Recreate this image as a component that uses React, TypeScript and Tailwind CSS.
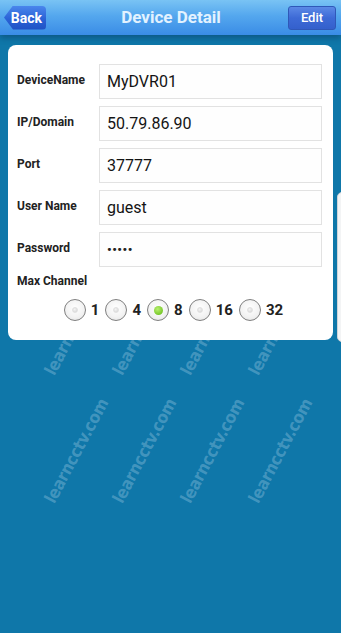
import React from "react";

const rows = [
  { label: "DeviceName", value: "MyDVR01" },
  { label: "IP/Domain", value: "50.79.86.90" },
  { label: "Port", value: "37777" },
  { label: "User Name", value: "guest" },
  { label: "Password", value: "•••••", pw: true },
];

const channels = ["1", "4", "8", "16", "32"];

function Radio({ checked }: { checked?: boolean }) {
  return (
    <div className="w-[22px] h-[22px] rounded-full border border-[#7f7f7f] bg-[radial-gradient(circle_at_50%_40%,#ffffff_0%,#f2f2f2_60%,#dcdcdc_100%)] flex items-center justify-center">
      {checked ? (
        <div className="w-[9px] h-[9px] rounded-full bg-[radial-gradient(circle_at_40%_35%,#b8f070_0%,#78c82a_70%,#5fa81c_100%)]" />
      ) : (
        <div className="w-[6px] h-[6px] rounded-full bg-[radial-gradient(circle_at_40%_35%,#f4f4f4_0%,#d2d2d2_100%)] border border-[#e0e0e0]" />
      )}
    </div>
  );
}

const wmRows = [378, 506];
const wmCols = [57, 125, 193, 261];

export default function App() {
  return (
    <div
      className="relative w-[341px] h-[633px] overflow-hidden bg-[#0f77a9]"
      style={{ fontFamily: "Roboto, 'Noto Sans', Arial, sans-serif" }}
    >
      {/* watermark layer (behind the content) */}
      <div className="absolute inset-0 pointer-events-none">
        {wmRows.map((yb) =>
          wmCols.map((x0) => (
            <span
              key={`${yb}-${x0}`}
              className="absolute whitespace-nowrap text-[17px] font-bold leading-[17px] text-[rgba(175,212,235,0.32)] origin-bottom-left"
              style={{
                left: x0,
                top: yb - 17,
                transform: "rotate(-62deg)",
                fontFamily: "'DejaVu Sans Condensed', 'Liberation Sans Narrow', sans-serif",
                fontStretch: "condensed",
                letterSpacing: "-0.3px",
              }}
            >
              learncctv.com
            </span>
          ))
        )}
      </div>

      {/* Header */}
      <div className="relative z-10 h-[35px] bg-[linear-gradient(to_bottom,#79c3f4_0%,#54a7ee_45%,#3a8ce6_100%)] shadow-[0_3px_6px_rgba(10,50,90,0.45)] flex items-center justify-between px-[4px]">
        <div className="relative h-[24px] flex items-center">
          <div className="h-[24px] w-[42px] bg-[linear-gradient(to_bottom,#4a86ec_0%,#2a62d6_55%,#1f52c4_100%)] [clip-path:polygon(9px_0,100%_0,100%_100%,9px_100%,0_50%)] rounded-r-[4px] flex items-center justify-end pr-[4px]">
            <span className="text-white text-[14px] font-bold leading-none">Back</span>
          </div>
        </div>
        <div className="absolute left-0 right-0 top-0 h-[35px] flex items-center justify-center pointer-events-none">
          <span className="text-[#e2f2ff] text-[17px] font-bold leading-none ml-[1px]">Device Detail</span>
        </div>
        <div className="h-[24px] w-[48px] mr-[1px] rounded-[3px] bg-[linear-gradient(to_bottom,#5b89e6_0%,#3d6ad6_50%,#3460cc_100%)] border border-[#2f58b8] flex items-center justify-center">
          <span className="text-white text-[13px] font-medium leading-none">Edit</span>
        </div>
      </div>

      {/* Card */}
      <div className="relative z-10 mt-[10px] mx-[8px] w-[325px] bg-white rounded-[8px] pt-[19px] pb-[19px] pl-[9px] pr-[11px]">
        <div className="flex flex-col gap-[7px]">
          {rows.map((r) => (
            <div key={r.label} className="flex items-center h-[35px]">
              <div className="w-[82px] text-[12px] font-bold text-[#222] leading-none -mt-[3px]">{r.label}</div>
              <div className="flex-1 h-[35px] border border-[#e2e2e2] bg-[#fefefe] flex items-center pl-[7px]">
                <span className={r.pw ? "text-[13px] text-[#222] font-bold tracking-[0.5px]" : "text-[16px] text-[#141414] leading-none"}>
                  {r.value}
                </span>
              </div>
            </div>
          ))}
        </div>
        <div className="mt-[8px] text-[12px] font-bold text-[#222] leading-none">Max Channel</div>
        <div className="mt-[12px] flex items-center justify-center pl-[8px]">
          {channels.map((c, i) => (
            <div key={c} className="flex items-center">
              <Radio checked={c === "8"} />
              <span className={`text-[15px] font-bold text-[#222] leading-none ml-[5px] ${i < channels.length - 1 ? "mr-[6px]" : ""}`}>{c}</span>
            </div>
          ))}
        </div>
      </div>

      {/* peeking panel on right */}
      <div className="absolute z-10 left-[337px] top-[192px] w-[20px] h-[150px] bg-[#f3f4f5] border border-[#d0d4d8] rounded-tl-[5px] rounded-bl-[5px]" />
    </div>
  );
}
